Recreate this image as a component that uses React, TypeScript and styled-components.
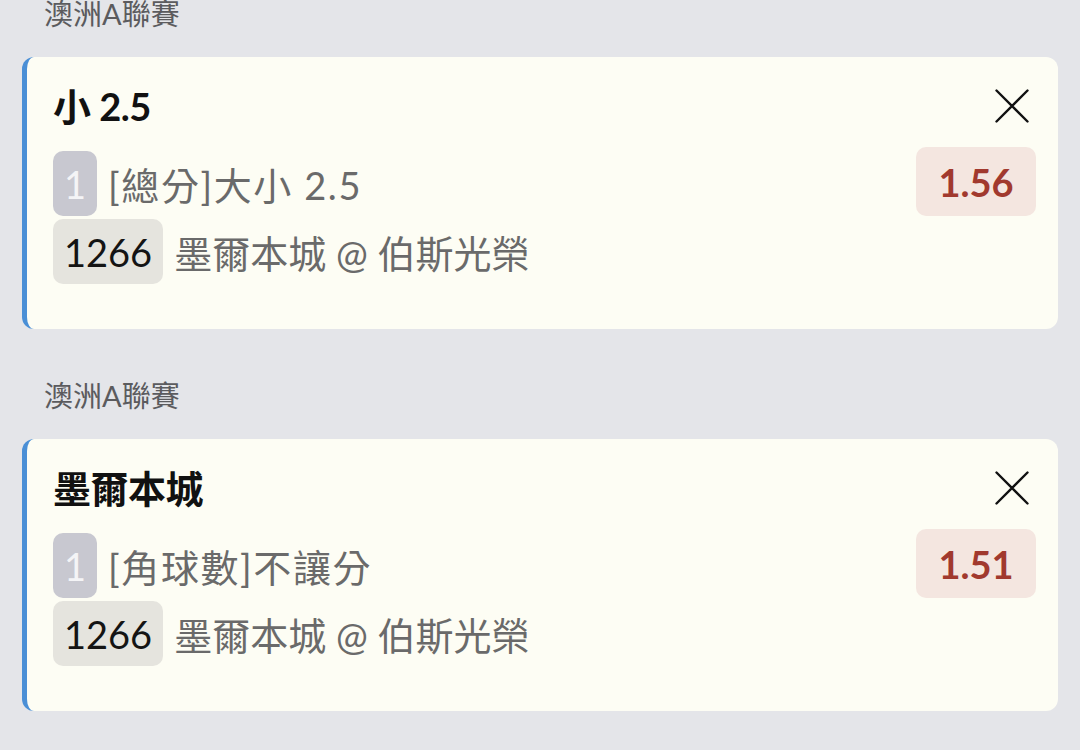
import React from 'react';
import styled, { createGlobalStyle } from 'styled-components';

interface Bet {
  league: string;
  title: string;
  market: string;
  code: string;
  match: string;
  odds: string;
}

const bets: Bet[] = [
  {
    league: '澳洲A聯賽',
    title: '小 2.5',
    market: '[總分]大小 2.5',
    code: '1266',
    match: '墨爾本城 @ 伯斯光榮',
    odds: '1.56',
  },
  {
    league: '澳洲A聯賽',
    title: '墨爾本城',
    market: '[角球數]不讓分',
    code: '1266',
    match: '墨爾本城 @ 伯斯光榮',
    odds: '1.51',
  },
];

const CloseIcon = () => (
  <svg width="34" height="34" viewBox="0 0 34 34" fill="none">
    <path d="M1.5 1.5 32.5 32.5M32.5 1.5 1.5 32.5" stroke="#111" strokeWidth="2.4" strokeLinecap="round" />
  </svg>
);

export default function App() {
  return (
    <>
      <GlobalStyle />
      <Page>
        {bets.map((bet, i) => (
          <Section key={i}>
            <League>{bet.league}</League>
            <Card>
              <Header>
                <Title>{bet.title}</Title>
                <CloseButton aria-label="close">
                  <CloseIcon />
                </CloseButton>
              </Header>
              <Body>
                <Rows>
                  <Row>
                    <Badge $tone="index">1</Badge>
                    <RowText $spaced>{bet.market}</RowText>
                  </Row>
                  <Row>
                    <Badge $tone="code">{bet.code}</Badge>
                    <RowText>{bet.match}</RowText>
                  </Row>
                </Rows>
                <Odds>{bet.odds}</Odds>
              </Body>
            </Card>
          </Section>
        ))}
      </Page>
    </>
  );
}

const GlobalStyle = createGlobalStyle`
  html, body {
    margin: 0;
    padding: 0;
    background: #e4e5e9;
  }
  body {
    font-family: "Lato", "Noto Sans CJK TC", sans-serif;
    -webkit-font-smoothing: antialiased;
  }
`;

const Page = styled.div`
  display: flex;
  flex-direction: column;
  gap: 54px;
  padding: 1px 22px 0;
  height: 750px;
  box-sizing: border-box;
  overflow: hidden;
`;

const Section = styled.section`
  display: flex;
  flex-direction: column;
  gap: 30px;
`;

const League = styled.div`
  padding-left: 22px;
  font-size: 29px;
  line-height: 26px;
  color: #5b5b5e;
`;

const Card = styled.div`
  background: #fdfdf4;
  border-left: 5px solid #4a8fd6;
  border-radius: 12px;
  padding: 26px 22px 45px 26px;
  display: flex;
  flex-direction: column;
  gap: 22px;
`;

const Header = styled.div`
  display: flex;
  align-items: center;
  justify-content: space-between;
  height: 46px;
`;

const Title = styled.div`
  font-size: 38px;
  font-weight: 700;
  line-height: 46px;
  letter-spacing: -0.5px;
  color: #111;
`;

const CloseButton = styled.button`
  width: 48px;
  height: 48px;
  border: 0;
  padding: 0;
  background: transparent;
  display: flex;
  align-items: center;
  justify-content: center;
`;

const Body = styled.div`
  display: flex;
  align-items: flex-start;
  justify-content: space-between;
`;

const Rows = styled.div`
  display: flex;
  flex-direction: column;
  gap: 3px;
`;

const Row = styled.div`
  display: flex;
  align-items: center;
  gap: 11px;
  height: 65px;
`;

const Badge = styled.span<{ $tone: 'index' | 'code' }>`
  height: 65px;
  display: flex;
  align-items: center;
  padding: 0 11px;
  border-radius: 10px;
  font-size: 38px;
  background: ${(p) => (p.$tone === 'index' ? '#c8c8d0' : '#e5e4de')};
  color: ${(p) => (p.$tone === 'index' ? '#f4f4f6' : '#141414')};
`;

const RowText = styled.span<{ $spaced?: boolean }>`
  font-size: 38px;
  letter-spacing: ${(p) => (p.$spaced ? '1.6px' : '0')};
  color: #6a6a6a;
  white-space: nowrap;
`;

const Odds = styled.div`
  margin-top: -4px;
  width: 120px;
  height: 69px;
  border-radius: 10px;
  background: #f4e6e0;
  color: #a1392e;
  font-size: 38px;
  font-weight: 700;
  display: flex;
  align-items: center;
  justify-content: center;
`;
